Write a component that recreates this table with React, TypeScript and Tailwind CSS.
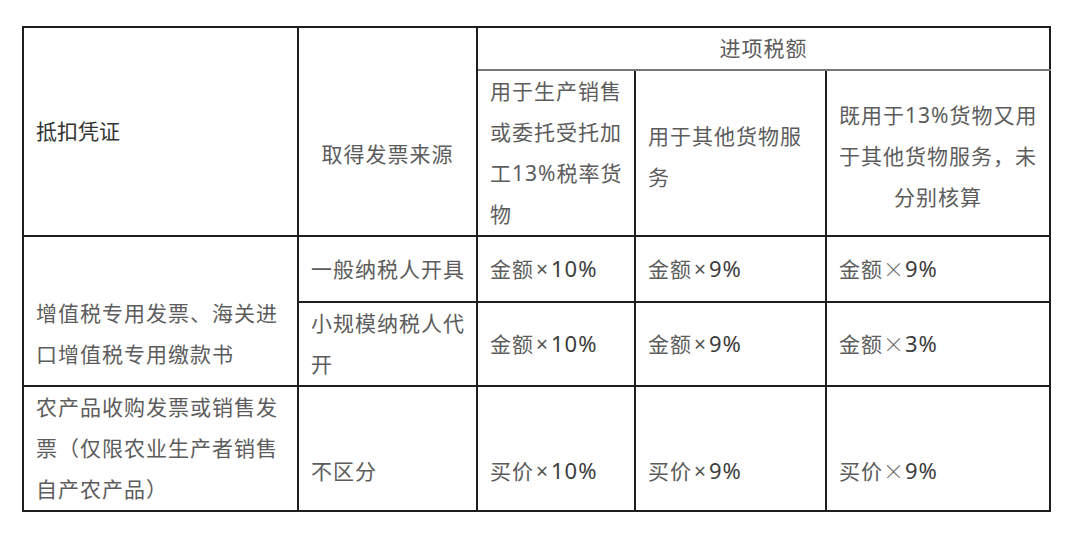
import clsx from 'clsx';
import type { ReactNode } from 'react';

function Cell({
  children,
  className,
  rowSpan,
  colSpan,
}: {
  children?: ReactNode;
  className?: string;
  rowSpan?: number;
  colSpan?: number;
}) {
  return (
    <td
      rowSpan={rowSpan}
      colSpan={colSpan}
      className={clsx(
        'border-2 border-[#1e1e1e] px-[12px] py-0 align-middle leading-[41px] whitespace-nowrap',
        className
      )}
    >
      {children}
    </td>
  );
}

// amount × rate, with the narrow latin "×"
function Rate({ base, rate }: { base: string; rate: string }) {
  return (
    <span>
      {base}
      <span className="text-[#555] px-[2px]">×</span>
      <span className="text-[22px] text-[#3c3c3c]">{rate}</span>
    </span>
  );
}

// amount × rate, with the wide CJK "×"
function WideRate({ base, rate }: { base: string; rate: string }) {
  return (
    <span>
      {base}
      <span className="font-['Noto_Sans_CJK_SC',sans-serif] font-light text-[#666]">×</span>
      <span className="text-[22px] text-[#3c3c3c]">{rate}</span>
    </span>
  );
}

export default function App() {
  return (
    <div className="min-h-screen bg-white pt-[26px] pl-[22px]">
      <table className="table-fixed border-collapse w-[1027px] text-[21px] tracking-[1px] text-[#5c5c5c] font-['Noto_Sans','Noto_Sans_CJK_SC',sans-serif]">
        <colgroup>
          <col className="w-[275px]" />
          <col className="w-[179px]" />
          <col className="w-[158px]" />
          <col className="w-[191px]" />
          <col className="w-[224px]" />
        </colgroup>
        <tbody>
          <tr className="h-[43px]">
            <Cell rowSpan={2} className="text-[#333] tracking-normal">
              抵扣凭证
            </Cell>
            <Cell rowSpan={2} className="text-center pt-[46px]">
              取得发票来源
            </Cell>
            <Cell colSpan={3} className="text-center border-b-[#777] leading-[36px]">
              进项税额
            </Cell>
          </tr>
          <tr className="h-[164px]">
            <Cell className="border-t-[#777]">
              用于生产销售
              <br />
              或委托受托加
              <br />
              工13%税率货
              <br />
              物
            </Cell>
            <Cell className="border-t-[#777] pt-[7px]">
              用于其他货物服
              <br />务
            </Cell>
            <Cell className="border-t-[#777] text-center pt-[7px]">
              既用于13%货物又用
              <br />
              于其他货物服务，未
              <br />
              分别核算
            </Cell>
          </tr>
          <tr className="h-[66px]">
            <Cell rowSpan={2} className="pt-[46px]">
              增值税专用发票、海关进
              <br />
              口增值税专用缴款书
            </Cell>
            <Cell>一般纳税人开具</Cell>
            <Cell>
              <Rate base="金额" rate="10%" />
            </Cell>
            <Cell>
              <Rate base="金额" rate="9%" />
            </Cell>
            <Cell>
              <WideRate base="金额" rate="9%" />
            </Cell>
          </tr>
          <tr className="h-[84px]">
            <Cell>
              小规模纳税人代
              <br />开
            </Cell>
            <Cell>
              <Rate base="金额" rate="10%" />
            </Cell>
            <Cell>
              <Rate base="金额" rate="9%" />
            </Cell>
            <Cell>
              <WideRate base="金额" rate="3%" />
            </Cell>
          </tr>
          <tr className="h-[124px]">
            <Cell>
              农产品收购发票或销售发
              <br />
              票（仅限农业生产者销售
              <br />
              自产农产品）
            </Cell>
            <Cell className="pt-[45px]">不区分</Cell>
            <Cell className="pt-[45px]">
              <Rate base="买价" rate="10%" />
            </Cell>
            <Cell className="pt-[45px]">
              <Rate base="买价" rate="9%" />
            </Cell>
            <Cell className="pt-[45px]">
              <WideRate base="买价" rate="9%" />
            </Cell>
          </tr>
        </tbody>
      </table>
    </div>
  );
}
